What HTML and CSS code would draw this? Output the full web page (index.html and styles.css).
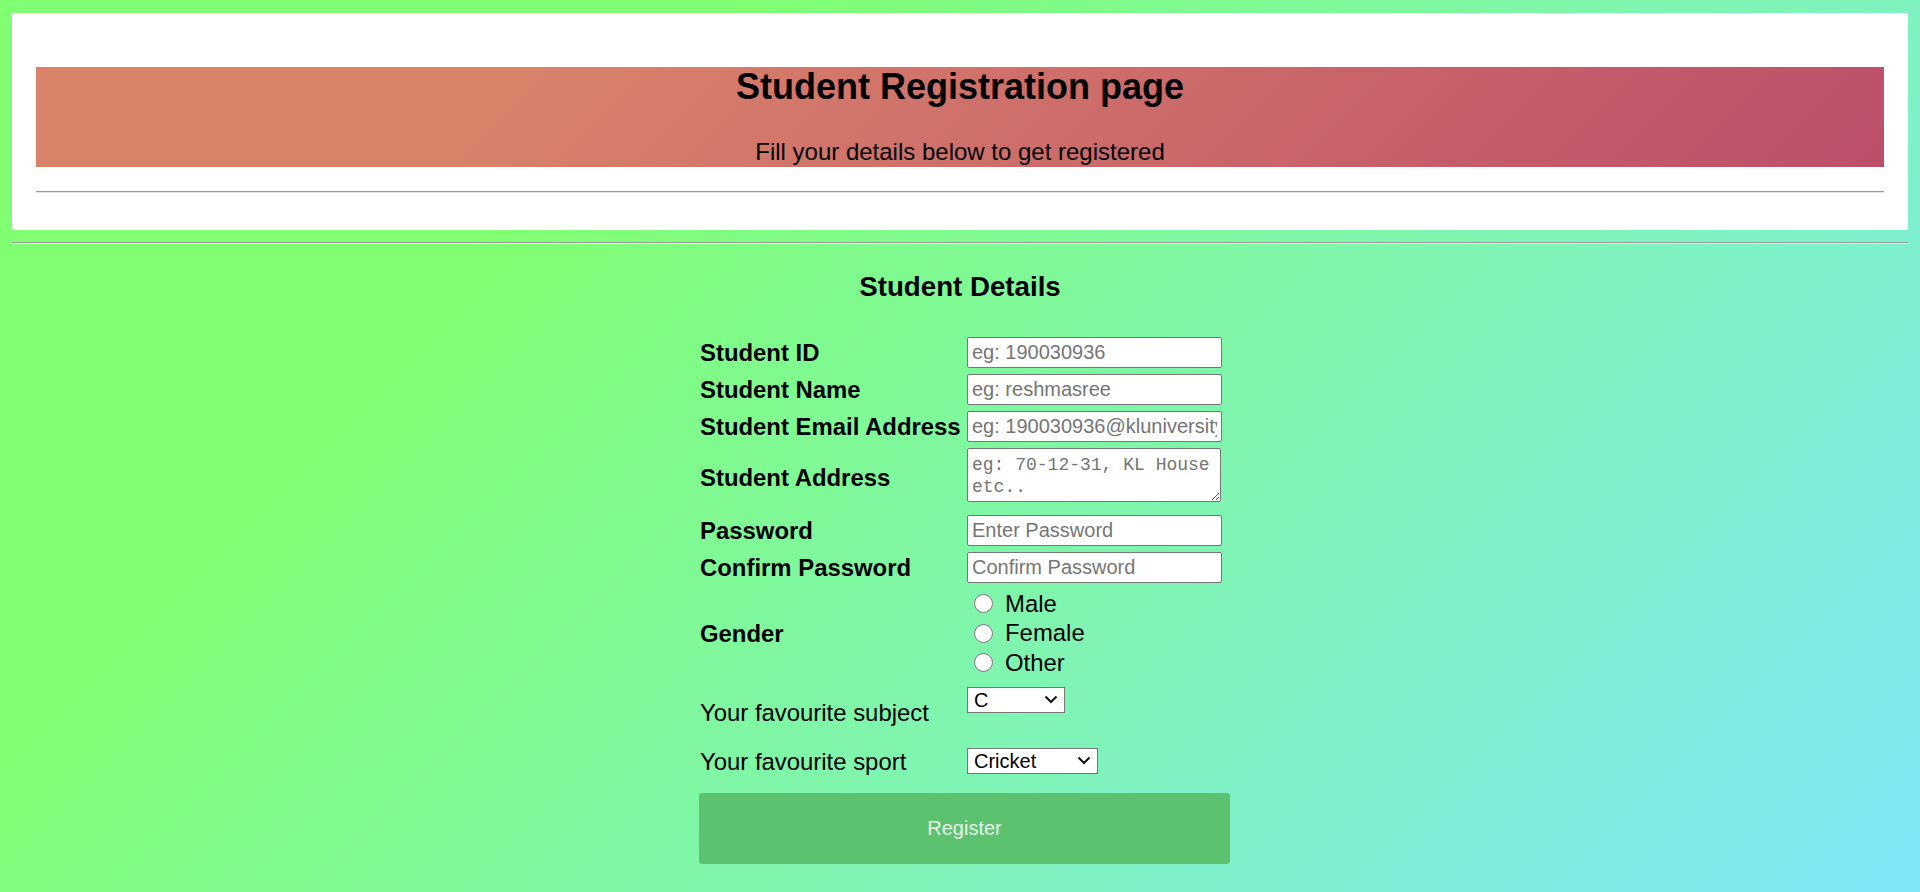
FILE: index.html
```html
<!DOCTYPE html>
<html lang="en" class="root">
<head>
<meta charset="utf-8">
<title>Student Registration page</title>
<link rel="stylesheet" href="styles.css">
</head>
<body class="page">
  <div class="card">
    <header class="banner">
      <h1 class="banner-title">Student Registration page</h1>
      <p class="banner-subtitle">Fill your details below to get registered</p>
    </header>
    <hr class="rule">
  </div>
  <hr class="rule rule-page">

  <h3 class="section-title">Student Details</h3>

  <div class="form-wrap">
    <form class="form-grid">
      <label class="field-label" for="sid">Student ID</label>
      <div class="field"><input class="text-input" id="sid" type="text" placeholder="eg: 190030936"></div>

      <label class="field-label" for="sname">Student Name</label>
      <div class="field"><input class="text-input" id="sname" type="text" placeholder="eg: reshmasree"></div>

      <label class="field-label" for="smail">Student Email Address</label>
      <div class="field"><input class="text-input" id="smail" type="email" placeholder="eg: 190030936@kluniversity.in"></div>

      <label class="field-label field-label-low" for="saddr">Student Address</label>
      <div class="field field-tall"><textarea class="text-area" id="saddr" placeholder="eg: 70-12-31, KL House etc.."></textarea></div>

      <label class="field-label row-spaced" for="pwd">Password</label>
      <div class="field row-spaced"><input class="text-input" id="pwd" type="password" placeholder="Enter Password"></div>

      <label class="field-label" for="cpwd">Confirm Password</label>
      <div class="field"><input class="text-input" id="cpwd" type="password" placeholder="Confirm Password"></div>

      <span class="field-label">Gender</span>
      <div class="field field-radios">
        <label class="radio-line"><input class="radio" type="radio" name="gender" value="male">Male</label>
        <label class="radio-line"><input class="radio" type="radio" name="gender" value="female">Female</label>
        <label class="radio-line"><input class="radio" type="radio" name="gender" value="other">Other</label>
      </div>

      <label class="field-label field-label-plain" for="subject">Your favourite subject</label>
      <div class="field field-subject">
        <span class="choice-box choice-box-subject">
          <select class="choice choice-subject" id="subject">
            <option>C</option>
            <option>C++</option>
            <option>Java</option>
            <option>Python</option>
          </select>
          <svg class="chevron" width="14" height="9" viewBox="0 0 14 9" aria-hidden="true"><polyline points="1.5,1.5 7,7 12.5,1.5" fill="none" stroke="#111" stroke-width="2"/></svg>
        </span>
      </div>

      <label class="field-label field-label-plain" for="sport">Your favourite sport</label>
      <div class="field field-sport">
        <span class="choice-box">
          <select class="choice choice-sport" id="sport">
            <option>Cricket</option>
            <option>Football</option>
            <option>Badminton</option>
            <option>Tennis</option>
          </select>
          <svg class="chevron" width="14" height="9" viewBox="0 0 14 9" aria-hidden="true"><polyline points="1.5,1.5 7,7 12.5,1.5" fill="none" stroke="#111" stroke-width="2"/></svg>
        </span>
      </div>

      <button class="register" type="submit">Register</button>
    </form>
  </div>
</body>
</html>
```

FILE: styles.css
```css
.root {
  min-height: 100%;
}

.page {
  margin: 13px 12px 0;
  font-family: "Liberation Sans", Arial, sans-serif;
  color: #000;
  background-color: #7ee8fa;
  background-image: linear-gradient(315deg, #7ee8fa 0%, #80ff72 74%);
}

.card {
  background: #fff;
  padding: 54px 24px 37px;
}

.banner {
  background-image: linear-gradient(315deg, #bc4e6a 0%, #d8826a 74%);
  text-align: center;
}

.banner-title {
  margin: 0;
  font-size: 36px;
  line-height: 40px;
  font-weight: bold;
}

.banner-subtitle {
  margin: 30px 0 0;
  font-size: 24px;
  line-height: 30px;
}

.rule {
  display: block;
  height: 0;
  margin: 24px 0 0;
  border: 0;
  border-top: 1px solid #9a9a9a;
  border-bottom: 1px solid #e6e6e6;
}

.rule-page {
  margin-top: 12px;
}

.section-title {
  margin: 27px 0 0;
  text-align: center;
  font-size: 27.7px;
  line-height: 32px;
  font-weight: bold;
}

.form-wrap {
  display: flex;
  justify-content: center;
  padding-left: 9px;
  margin-top: 34px;
}

.form-grid {
  display: grid;
  grid-template-columns: 268px 263px;
  row-gap: 6px;
  width: 531px;
}

.field-label {
  display: flex;
  align-items: center;
  padding-left: 1px;
  font-size: 23.9px;
  line-height: 28px;
  font-weight: bold;
  white-space: nowrap;
}

.field-label-low {
  padding-top: 5px;
}

.field-label-plain {
  font-weight: normal;
}

.row-spaced {
  margin-top: 7px;
}

.field {
  display: flex;
  align-items: center;
  height: 31px;
}

.field-tall {
  height: 54px;
}

.text-input {
  box-sizing: border-box;
  width: 255px;
  height: 31px;
  margin: 0;
  padding: 0 4px;
  border: 1px solid #767676;
  border-radius: 2px;
  background: #fff;
  font-family: "Liberation Sans", Arial, sans-serif;
  font-size: 20px;
  color: #000;
}

.text-input::placeholder,
.text-area::placeholder {
  color: #757575;
  opacity: 1;
}

.text-area {
  box-sizing: border-box;
  width: 254px;
  height: 54px;
  margin: 0;
  padding: 5px 4px 3px;
  border: 1px solid #767676;
  border-radius: 2px;
  background: #fff;
  font-family: "Liberation Mono", "DejaVu Sans Mono", monospace;
  font-size: 18px;
  line-height: 22px;
}

.field-radios {
  height: 89px;
  flex-direction: column;
  align-items: flex-start;
  justify-content: flex-start;
}

.radio-line {
  display: flex;
  align-items: center;
  height: 29.5px;
  font-size: 23.9px;
  line-height: 28px;
}

.radio {
  width: 19px;
  height: 19px;
  margin: 0 12px 0 7px;
}

.field-subject {
  height: 58px;
  align-items: flex-start;
}

.field-sport {
  height: 26px;
}

.choice-box {
  position: relative;
  display: inline-flex;
}

.choice-box-subject {
  margin-top: 3px;
}

.choice {
  box-sizing: border-box;
  height: 26px;
  margin: 0;
  padding: 0 24px 0 6px;
  border: 1px solid #767676;
  border-radius: 0;
  background: #fff;
  color: #000;
  font-family: "Liberation Sans", Arial, sans-serif;
  font-size: 20px;
  -webkit-appearance: none;
  appearance: none;
}

.choice-subject {
  width: 98px;
}

.choice-sport {
  width: 131px;
}

.chevron {
  position: absolute;
  right: 7px;
  top: 8px;
  pointer-events: none;
}

.register {
  grid-column: 1 / span 2;
  display: block;
  width: 100%;
  height: 71px;
  margin-top: 11px;
  border: 0;
  border-radius: 3px;
  background: #5dc26f;
  color: #e4f6e7;
  font-family: "Liberation Sans", Arial, sans-serif;
  font-size: 20px;
  cursor: pointer;
}
```
